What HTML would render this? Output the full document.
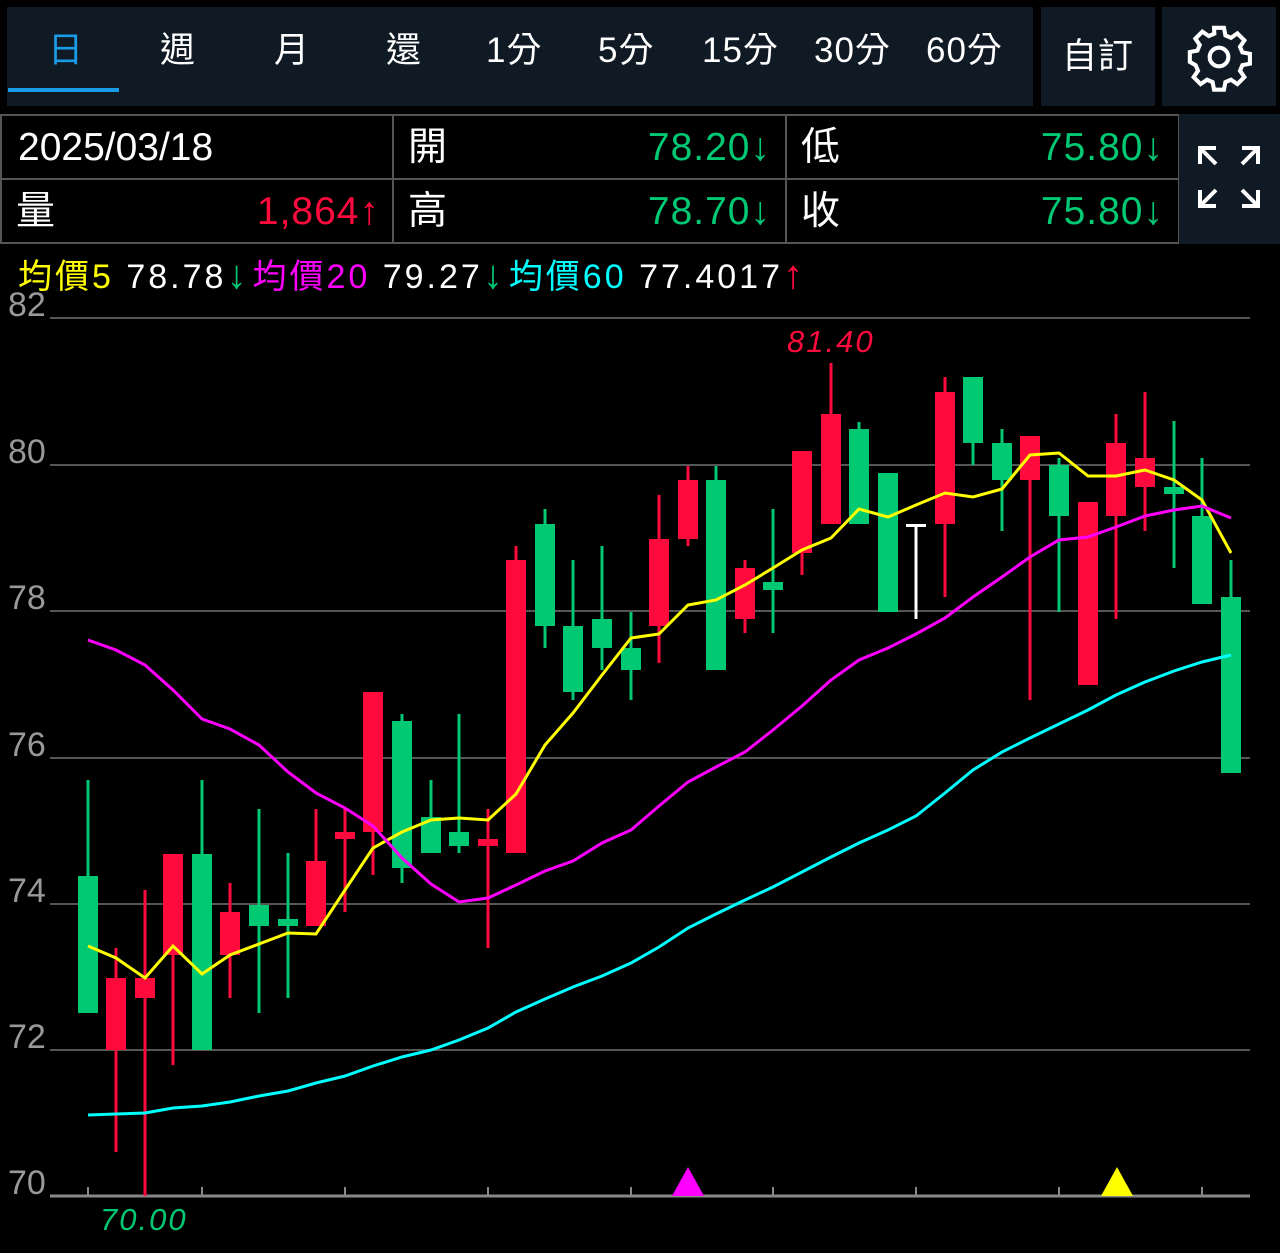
<!DOCTYPE html>
<html><head><meta charset="utf-8"><style>
*{margin:0;padding:0;box-sizing:border-box}
body{width:1280px;height:1253px;background:#000;overflow:hidden;font-family:"Liberation Sans","Noto Sans CJK TC",sans-serif;color:#fff;position:relative}
.bar{position:absolute;top:7px;height:99px;background:#101a24}
.tab{position:absolute;top:26px;font-size:35px;line-height:50px;color:#fff;white-space:nowrap;letter-spacing:1px}
.cell{position:absolute;border:2px solid #555;background:#000;font-size:39px}
.cell .l{position:absolute;left:14px;top:2px;line-height:60px}
.cell .r{position:absolute;right:14px;top:2px;line-height:60px;letter-spacing:1px}
.g{color:#00c873}.rd{color:#ff0a3c}
.leg{position:absolute;top:252px;left:18px;font-size:34px;line-height:46px;white-space:nowrap;letter-spacing:3px}
.leg b{font-weight:normal;font-size:40px;letter-spacing:6px}
</style></head><body>
<div class="bar" style="left:7px;width:1026px"></div>
<div class="bar" style="left:1041px;width:114px"></div>
<div class="bar" style="left:1162px;width:114px"></div>
<div class="tab" style="left:48px;color:#1a9be8">日</div>
<div class="tab" style="left:160px">週</div>
<div class="tab" style="left:274px">月</div>
<div class="tab" style="left:386px">還</div>
<div class="tab" style="left:486px">1分</div>
<div class="tab" style="left:598px">5分</div>
<div class="tab" style="left:702px">15分</div>
<div class="tab" style="left:814px">30分</div>
<div class="tab" style="left:926px">60分</div>
<div style="position:absolute;left:8px;top:88px;width:111px;height:4px;background:#1a9be8"></div>
<div class="tab" style="left:1062px;top:32px">自訂</div>
<svg style="position:absolute;left:1184px;top:22px" width="70" height="70" viewBox="0 0 24 24" fill="none" stroke="#fff" stroke-width="1.4"><circle cx="12" cy="12" r="3.2"/><path d="M10.3 2h3.4l.5 2.6 1.9.8 2.2-1.5 2.4 2.4-1.5 2.2.8 1.9 2.6.5v3.4l-2.6.5-.8 1.9 1.5 2.2-2.4 2.4-2.2-1.5-1.9.8-.5 2.6h-3.4l-.5-2.6-1.9-.8-2.2 1.5-2.4-2.4 1.5-2.2-.8-1.9L2 13.7v-3.4l2.6-.5.8-1.9-1.5-2.2 2.4-2.4 2.2 1.5 1.9-.8z"/></svg>

<div class="cell" style="left:0;top:114px;width:394px;height:66px"><span class="l" style="left:16px">2025/03/18</span></div>
<div class="cell" style="left:0;top:178px;width:394px;height:66px"><span class="l">量</span><span class="r rd" style="right:12px">1,864↑</span></div>
<div class="cell" style="left:392px;top:114px;width:395px;height:66px"><span class="l">開</span><span class="r g">78.20↓</span></div>
<div class="cell" style="left:392px;top:178px;width:395px;height:66px"><span class="l">高</span><span class="r g">78.70↓</span></div>
<div class="cell" style="left:785px;top:114px;width:395px;height:66px"><span class="l">低</span><span class="r g">75.80↓</span></div>
<div class="cell" style="left:785px;top:178px;width:395px;height:66px"><span class="l">收</span><span class="r g">75.80↓</span></div>
<div style="position:absolute;left:1179px;top:114px;width:101px;height:130px;background:#101a24"></div>
<svg style="position:absolute;left:1196px;top:144px" width="66" height="66" viewBox="0 0 66 66" fill="none" stroke="#fff" stroke-width="4"><path d="M4 20V4h16M4 4l16 16M46 4h16v16M62 4L46 20M4 46v16h16M4 62l16-16M62 46v16H46M62 62L46 46"/></svg>

<div class="leg"><span style="color:#ffff00">均價5 </span>78.78<b class="g">↓</b><span style="color:#ff00ff">均價20 </span>79.27<b class="g">↓</b><span style="color:#00ffff">均價60 </span>77.4017<b class="rd">↑</b></div>

<svg id="c" style="position:absolute;left:0;top:0" width="1280" height="1253"></svg>
<script>
var s='';
var grid=[[318,'82'],[465,'80'],[611,'78'],[758,'76'],[904,'74'],[1050,'72'],[1196,'70']];
grid.forEach(function(g,i){s+='<line x1="50" x2="1250" y1="'+g[0]+'" y2="'+g[0]+'" stroke="'+(i==6?'#888':'#555')+'" stroke-width="'+(i==6?3:2)+'"/>';
s+='<text x="8" y="'+(g[0]-2)+'" fill="#999" font-size="34" font-family="Liberation Sans">'+g[1]+'</text>';});
[88,202,345,488,631,773,916,1059,1202].forEach(function(x){s+='<line x1="'+x+'" x2="'+x+'" y1="1187" y2="1196" stroke="#888" stroke-width="2"/>';});
var c=[[88,'G',876,1013,780,1013],[116,'R',978,1050,948,1152],[145,'R',978,998,890,1196],[173,'R',854,955,854,1065],[202,'G',854,1050,780,1050],[230,'R',912,955,883,998],[259,'G',905,926,809,1013],[288,'G',919,926,853,998],[316,'R',861,926,809,926],[345,'R',832,839,809,912],[373,'R',692,832,692,875],[402,'G',721,868,714,883],[431,'G',817,853,780,853],[459,'G',832,846,714,853],[488,'R',839,846,809,948],[516,'R',560,853,546,853],[545,'G',524,626,509,648],[573,'G',626,692,560,700],[602,'G',619,648,546,670],[631,'G',648,670,612,700],[659,'R',539,626,495,663],[688,'R',480,539,466,546],[716,'G',480,670,466,670],[745,'R',568,619,560,633],[773,'G',582,590,509,633],[802,'R',451,553,451,575],[831,'R',414,524,363,524],[859,'G',429,524,422,524],[888,'G',473,612,473,612],[916,'W',524,527,524,619],[945,'R',392,524,377,597],[973,'G',377,443,377,465],[1002,'G',443,480,429,531],[1030,'R',436,480,436,700],[1059,'G',465,516,458,612],[1088,'R',502,685,502,685],[1116,'R',443,516,414,619],[1145,'R',458,487,392,531],[1174,'G',487,494,421,568],[1202,'G',516,604,458,604],[1231,'G',597,773,560,773]];
c.forEach(function(k){var col=k[1]=='G'?'#00c873':k[1]=='R'?'#ff0a3c':'#fff';
s+='<line x1="'+k[0]+'" x2="'+k[0]+'" y1="'+k[4]+'" y2="'+k[5]+'" stroke="'+col+'" stroke-width="3"/>';
s+='<rect x="'+(k[0]-10)+'" y="'+k[2]+'" width="20" height="'+Math.max(3,k[3]-k[2])+'" fill="'+col+'"/>';});
var xs=c.map(function(k){return k[0]});
function pl(ys,col){var p=xs.map(function(x,i){return x+','+ys[i]}).join(' ');s+='<polyline points="'+p+'" fill="none" stroke="'+col+'" stroke-width="3"/>';}
pl([946,958,978,946,974,955,944,933,934,890,848,832,820,818,820,794,745,713,675,638,634,605,600,585,568,550,538,509,517,505,493,497,489,455,453,476,476,470,480,500,553],'#ffff00');
pl([640,650,665,690,719,729,745,772,793,808,826,858,884,902,898,885,871,861,843,830,806,782,767,752,730,706,680,660,648,634,618,597,577,557,540,537,527,516,510,506,518],'#ff00ff');
pl([1115,1114,1113,1108,1106,1102,1096,1091,1083,1076,1066,1057,1050,1040,1028,1012,999,987,976,963,947,928,914,900,887,872,857,843,830,816,793,770,752,738,724,710,695,682,671,662,655],'#00ffff');
s+='<polygon points="688,1167 672,1196 704,1196" fill="#ff00ff"/><polygon points="1117,1167 1101,1196 1133,1196" fill="#ffff00"/>';
s+='<text x="787" y="352" fill="#ff0a3c" font-size="31" font-style="italic" letter-spacing="2" font-family="Liberation Sans">81.40</text>';
s+='<text x="100" y="1230" fill="#00c873" font-size="31" font-style="italic" letter-spacing="2" font-family="Liberation Sans">70.00</text>';
document.getElementById('c').innerHTML=s;
</script>
</body></html>
